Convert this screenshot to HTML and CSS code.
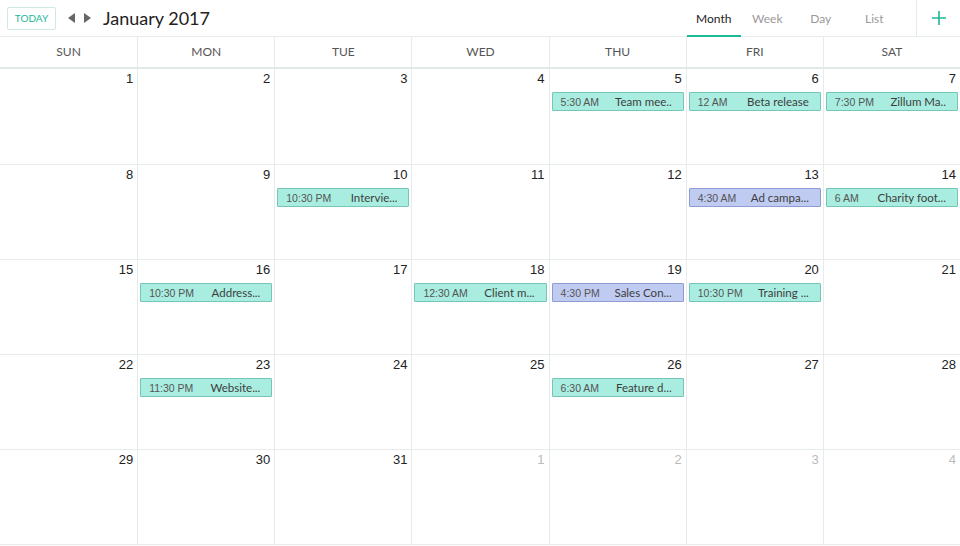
FILE: index.html
```html
<!DOCTYPE html>
<html lang="en">
<head>
    <meta charset="UTF-8">
    <title>Calendar - January 2017</title>
    <link rel="stylesheet" href="styles.css">
</head>
<body>
    <!-- Top Bar -->
    <header class="topbar">
        <button class="today-btn">Today</button>
        <div class="nav-arrows">
            <span class="arrow arrow-left"></span>
            <span class="arrow arrow-right"></span>
        </div>
        <h1 class="month-title">January 2017</h1>
        <nav class="view-tabs">
            <a class="tab active">Month</a>
            <a class="tab">Week</a>
            <a class="tab">Day</a>
            <a class="tab">List</a>
        </nav>
        <div class="add-btn">
            <svg width="16" height="16" viewBox="0 0 16 16">
                <path d="M8 1v14M1 8h14" stroke="#1bb99a" stroke-width="1.6" fill="none"/>
            </svg>
        </div>
    </header>

    <!-- Weekday Header -->
    <div class="weekdays">
        <div class="weekday">Sun</div>
        <div class="weekday">Mon</div>
        <div class="weekday">Tue</div>
        <div class="weekday">Wed</div>
        <div class="weekday">Thu</div>
        <div class="weekday">Fri</div>
        <div class="weekday">Sat</div>
    </div>

    <!-- Month Grid -->
    <div class="month-grid">
        <!-- Week 1 -->
        <div class="day"><span class="num">1</span></div>
        <div class="day"><span class="num">2</span></div>
        <div class="day"><span class="num">3</span></div>
        <div class="day"><span class="num">4</span></div>
        <div class="day"><span class="num">5</span>
            <div class="event"><span class="time">5:30 AM</span><span class="title">Team mee..</span></div>
        </div>
        <div class="day"><span class="num">6</span>
            <div class="event"><span class="time">12 AM</span><span class="title">Beta release</span></div>
        </div>
        <div class="day"><span class="num">7</span>
            <div class="event"><span class="time">7:30 PM</span><span class="title">Zillum Ma..</span></div>
        </div>

        <!-- Week 2 -->
        <div class="day"><span class="num">8</span></div>
        <div class="day"><span class="num">9</span></div>
        <div class="day"><span class="num">10</span>
            <div class="event"><span class="time">10:30 PM</span><span class="title">Intervie...</span></div>
        </div>
        <div class="day"><span class="num">11</span></div>
        <div class="day"><span class="num">12</span></div>
        <div class="day"><span class="num">13</span>
            <div class="event blue"><span class="time">4:30 AM</span><span class="title">Ad campa...</span></div>
        </div>
        <div class="day"><span class="num">14</span>
            <div class="event"><span class="time">6 AM</span><span class="title">Charity foot...</span></div>
        </div>

        <!-- Week 3 -->
        <div class="day"><span class="num">15</span></div>
        <div class="day"><span class="num">16</span>
            <div class="event"><span class="time">10:30 PM</span><span class="title">Address...</span></div>
        </div>
        <div class="day"><span class="num">17</span></div>
        <div class="day"><span class="num">18</span>
            <div class="event"><span class="time">12:30 AM</span><span class="title">Client m...</span></div>
        </div>
        <div class="day"><span class="num">19</span>
            <div class="event blue"><span class="time">4:30 PM</span><span class="title">Sales Con...</span></div>
        </div>
        <div class="day"><span class="num">20</span>
            <div class="event"><span class="time">10:30 PM</span><span class="title">Training ...</span></div>
        </div>
        <div class="day"><span class="num">21</span></div>

        <!-- Week 4 -->
        <div class="day"><span class="num">22</span></div>
        <div class="day"><span class="num">23</span>
            <div class="event"><span class="time">11:30 PM</span><span class="title">Website...</span></div>
        </div>
        <div class="day"><span class="num">24</span></div>
        <div class="day"><span class="num">25</span></div>
        <div class="day"><span class="num">26</span>
            <div class="event"><span class="time">6:30 AM</span><span class="title">Feature d...</span></div>
        </div>
        <div class="day"><span class="num">27</span></div>
        <div class="day"><span class="num">28</span></div>

        <!-- Week 5 -->
        <div class="day"><span class="num">29</span></div>
        <div class="day"><span class="num">30</span></div>
        <div class="day"><span class="num">31</span></div>
        <div class="day other"><span class="num">1</span></div>
        <div class="day other"><span class="num">2</span></div>
        <div class="day other"><span class="num">3</span></div>
        <div class="day other"><span class="num">4</span></div>
    </div>
</body>
</html>
```

FILE: styles.css
```css
/* General */
* {
    box-sizing: border-box;
}

body {
    margin: 0;
    font-family: 'Lato', 'Liberation Sans', sans-serif;
    color: #333;
    background-color: #fff;
    width: 960px;
    height: 546px;
    overflow: hidden;
}

/* Top Bar */
.topbar {
    display: flex;
    align-items: center;
    height: 37px;
    border-bottom: 1px solid #e6ebeb;
    padding-left: 7px;
}

.today-btn {
    height: 23px;
    width: 49px;
    padding: 0;
    background-color: #fff;
    border: 1px solid #cfe9e3;
    border-radius: 2px;
    color: #1bb99a;
    font-family: 'Lato', sans-serif;
    font-size: 10px;
    text-transform: uppercase;
    cursor: pointer;
}

.nav-arrows {
    display: flex;
    gap: 9px;
    margin-left: 12px;
}

.arrow {
    width: 0;
    height: 0;
    border-top: 5px solid transparent;
    border-bottom: 5px solid transparent;
}

.arrow-left {
    border-right: 7px solid #666;
}

.arrow-right {
    border-left: 7px solid #666;
}

.month-title {
    margin: 0 0 0 12px;
    font-size: 18px;
    font-weight: 400;
    color: #222;
}

.view-tabs {
    display: flex;
    margin-left: auto;
    align-self: stretch;
}

.tab {
    width: 53.5px;
    display: flex;
    align-items: center;
    justify-content: center;
    font-size: 12px;
    color: #999;
    border-bottom: 2px solid transparent;
    margin-bottom: -1px;
    padding-top: 1px;
    cursor: pointer;
}

.tab.active {
    color: #222;
    border-bottom-color: #1bb99a;
}

.add-btn {
    margin-left: 15px;
    width: 44px;
    align-self: stretch;
    border-left: 1px solid #e6ebeb;
    display: flex;
    align-items: center;
    justify-content: center;
}

/* Weekday Header */
.weekdays {
    display: grid;
    grid-template-columns: repeat(7, 1fr);
    height: 32px;
    border-bottom: 2px solid #e3e9e9;
}

.weekday {
    display: flex;
    align-items: center;
    justify-content: center;
    padding-bottom: 2px;
    font-size: 12px;
    color: #555;
    text-transform: uppercase;
    border-left: 1px solid #e6ebeb;
}

.weekday:first-child {
    border-left: none;
}

/* Month Grid */
.month-grid {
    display: grid;
    grid-template-columns: repeat(7, 1fr);
    grid-template-rows: 96px repeat(4, 95px);
}

.day {
    border-left: 1px solid #e6ebeb;
    border-bottom: 1px solid #e6ebeb;
    padding: 2px 2px 0 2px;
    display: flex;
    flex-direction: column;
}

.day:nth-child(7n+1) {
    border-left: none;
}

.num {
    align-self: flex-end;
    padding-right: 2px;
    font-family: 'Liberation Sans', sans-serif;
    font-size: 13px;
    color: #222;
    line-height: 15px;
}

.day.other .num {
    color: #bbb;
}

/* Events */
.event {
    margin-top: 6px;
    height: 19px;
    display: flex;
    align-items: center;
    background-color: #a9ede1;
    border: 1px solid #75c6b7;
    border-radius: 1px;
    padding: 0 11px 0 8px;
    white-space: nowrap;
    overflow: hidden;
}

.event.blue {
    background-color: #c0cbf1;
    border-color: #8e9bd4;
}

.time {
    font-family: 'Liberation Sans', sans-serif;
    font-size: 10.5px;
    color: #555;
    flex-shrink: 0;
}

.title {
    flex: 1;
    text-align: right;
    font-size: 11.5px;
    color: #3d3d3d;
    overflow: hidden;
    padding-left: 6px;
}
```
